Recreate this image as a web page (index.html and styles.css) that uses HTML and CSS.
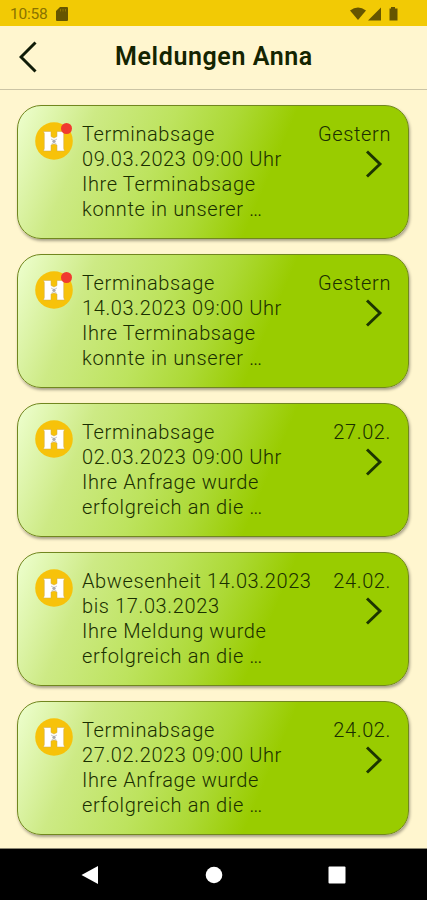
FILE: index.html
```html
<!DOCTYPE html>
<html lang="de">
<head>
    <meta charset="UTF-8">
    <meta name="viewport" content="width=device-width, initial-scale=1.0">
    <title>Meldungen Anna</title>
    <link rel="stylesheet" href="styles.css">
</head>
<body>
    <!-- Shared icons -->
    <svg class="sprite" width="0" height="0">
        <symbol id="logo" viewBox="0 0 38 38">
            <circle cx="19" cy="19" r="18.8" fill="#f7c20a"/>
            <path d="M8.500 9.500h7.500v5l3 1.500 3-1.500v-5h7.500l-.8 2v15l.8 2.500H22v-6l-3-1-3 1v6H8.500l.8-2.500v-15z" fill="#fff" stroke="#cfa94a" stroke-width="0.500"/>
            <path d="M16 17l3 1.500 3-1.500M16.500 22l2.500-1.500 2.500 1.500" fill="none" stroke="#bbb" stroke-width="0.800"/>
            <circle cx="19" cy="19.300" r="1.600" fill="#a9aaae"/>
        </symbol>
        <symbol id="chevron" viewBox="0 0 18 28">
            <path d="M2 1.500L15 14 2 26.500" fill="none" stroke="#1c3500" stroke-width="2.900"/>
        </symbol>
    </svg>

    <div class="status-bar">
        <span class="time">10:58</span>
        <svg class="sd-card" width="12" height="14" viewBox="0 0 12 14">
            <path d="M4 0h7q1 0 1 1v12q0 1-1 1H1q-1 0-1-1V4z" fill="#665500"/>
            <path d="M4.500 2v2.500M7 2v2.500M9.500 2v2.500" stroke="#8f7700" stroke-width="1"/>
        </svg>
        <svg class="signals" width="48" height="14" viewBox="0 0 48 14">
            <path d="M0 3.500Q8 -2.500 16 3.500L8 13z" fill="#665500"/>
            <path d="M18 13.500L31 0.500v13z" fill="#665500"/>
            <path d="M41 0h4v1.500h2.500v12h-8V1.500H41z" fill="#665500"/>
        </svg>
    </div>

    <header class="header">
        <svg class="back" width="18" height="32" viewBox="0 0 18 32">
            <path d="M16.500 1.500L2 16l14.500 14.500" fill="none" stroke="#101c08" stroke-width="3"/>
        </svg>
        <h1>Meldungen Anna</h1>
    </header>

    <main class="messages">
        <div class="card">
            <div class="avatar">
                <svg width="38" height="38"><use href="#logo"/></svg>
                <span class="badge"></span>
            </div>
            <p class="text">Terminabsage<br>09.03.2023 09:00 Uhr<br>Ihre Terminabsage<br>konnte in unserer <span class="dots">...</span></p>
            <div class="side">
                <span>Gestern</span>
                <svg class="arrow" width="18" height="28"><use href="#chevron"/></svg>
            </div>
        </div>
        <div class="card">
            <div class="avatar">
                <svg width="38" height="38"><use href="#logo"/></svg>
                <span class="badge"></span>
            </div>
            <p class="text">Terminabsage<br>14.03.2023 09:00 Uhr<br>Ihre Terminabsage<br>konnte in unserer <span class="dots">...</span></p>
            <div class="side">
                <span>Gestern</span>
                <svg class="arrow" width="18" height="28"><use href="#chevron"/></svg>
            </div>
        </div>
        <div class="card">
            <div class="avatar">
                <svg width="38" height="38"><use href="#logo"/></svg>
            </div>
            <p class="text">Terminabsage<br>02.03.2023 09:00 Uhr<br>Ihre Anfrage wurde<br>erfolgreich an die <span class="dots">...</span></p>
            <div class="side">
                <span>27.02.</span>
                <svg class="arrow" width="18" height="28"><use href="#chevron"/></svg>
            </div>
        </div>
        <div class="card">
            <div class="avatar">
                <svg width="38" height="38"><use href="#logo"/></svg>
            </div>
            <p class="text">Abwesenheit 14.03.2023<br>bis 17.03.2023<br>Ihre Meldung wurde<br>erfolgreich an die <span class="dots">...</span></p>
            <div class="side">
                <span>24.02.</span>
                <svg class="arrow" width="18" height="28"><use href="#chevron"/></svg>
            </div>
        </div>
        <div class="card">
            <div class="avatar">
                <svg width="38" height="38"><use href="#logo"/></svg>
            </div>
            <p class="text">Terminabsage<br>27.02.2023 09:00 Uhr<br>Ihre Anfrage wurde<br>erfolgreich an die <span class="dots">...</span></p>
            <div class="side">
                <span>24.02.</span>
                <svg class="arrow" width="18" height="28"><use href="#chevron"/></svg>
            </div>
        </div>
    </main>

    <nav class="nav-bar">
        <svg width="18" height="20" viewBox="0 0 18 20"><path d="M0.500 10L17 1v18z" fill="#fff"/></svg>
        <svg width="18" height="18" viewBox="0 0 18 18"><circle cx="9" cy="9" r="8.300" fill="#fff"/></svg>
        <svg width="18" height="18" viewBox="0 0 18 18"><rect x="0.500" y="0.500" width="17" height="17" rx="1" fill="#fff"/></svg>
    </nav>
</body>
</html>
```
FILE: styles.css
```css
* {
    margin: 0;
    padding: 0;
    box-sizing: border-box;
}

body {
    font-family: Roboto, sans-serif;
    background-color: #fff6cf;
    color: #142400;
    display: flex;
    flex-direction: column;
    height: 900px;
    overflow: hidden;
}

.sprite {
    display: none;
}

/* Status bar */
.status-bar {
    height: 26px;
    flex: none;
    display: flex;
    align-items: center;
    padding: 2px 29px 0 10px;
    background-color: #f2ca05;
}

.time {
    color: #8a7200;
    font-size: 15.5px;
    letter-spacing: -0.2px;
}

.sd-card {
    margin-left: 8px;
}

.signals {
    margin-left: auto;
}

/* Header */
.header {
    height: 64px;
    flex: none;
    display: flex;
    align-items: center;
    border-bottom: 1px solid #cbc4a5;
    padding: 0 36px 1px 19px;
}

h1 {
    flex: 1;
    text-align: center;
    font-size: 25px;
    font-weight: 600;
    line-height: 30px;
    letter-spacing: 0.6px;
}

/* Message list */
.messages {
    flex: 1;
    display: flex;
    flex-direction: column;
    gap: 15.2px;
    padding: 14.6px 18px 0 17px;
    border-bottom: 1px solid #8b8772;
}

.card {
    height: 134px;
    flex: none;
    display: flex;
    padding: 16px 17px 0;
    border: 1px solid #71871f;
    border-radius: 24px;
    background: linear-gradient(113deg, #eeffcf 0%, #cdea85 18%, #bde35e 36%, #acd935 50%, #99cc00 63%);
    box-shadow: 1px 2px 3px rgba(0, 0, 0, 0.35);
    color: #1a2f00;
    font-size: 20px;
    font-weight: 300;
    line-height: 25px;
    letter-spacing: 0.62px;
}

.avatar {
    position: relative;
    width: 47px;
    flex: none;
}

.avatar svg {
    display: block;
}

.badge {
    position: absolute;
    top: 1px;
    left: 26px;
    width: 11px;
    height: 11px;
    border-radius: 50%;
    background-color: #f03a30;
}

.text {
    white-space: nowrap;
}

.dots {
    letter-spacing: -0.8px;
}

.side {
    margin-left: auto;
    display: flex;
    flex-direction: column;
    align-items: flex-end;
}

.arrow {
    margin: 3px 8px 0 0;
}

/* Android navigation */
.nav-bar {
    height: 51px;
    flex: none;
    display: flex;
    align-items: center;
    justify-content: space-between;
    padding: 0 81px;
    background-color: #000;
}
```
